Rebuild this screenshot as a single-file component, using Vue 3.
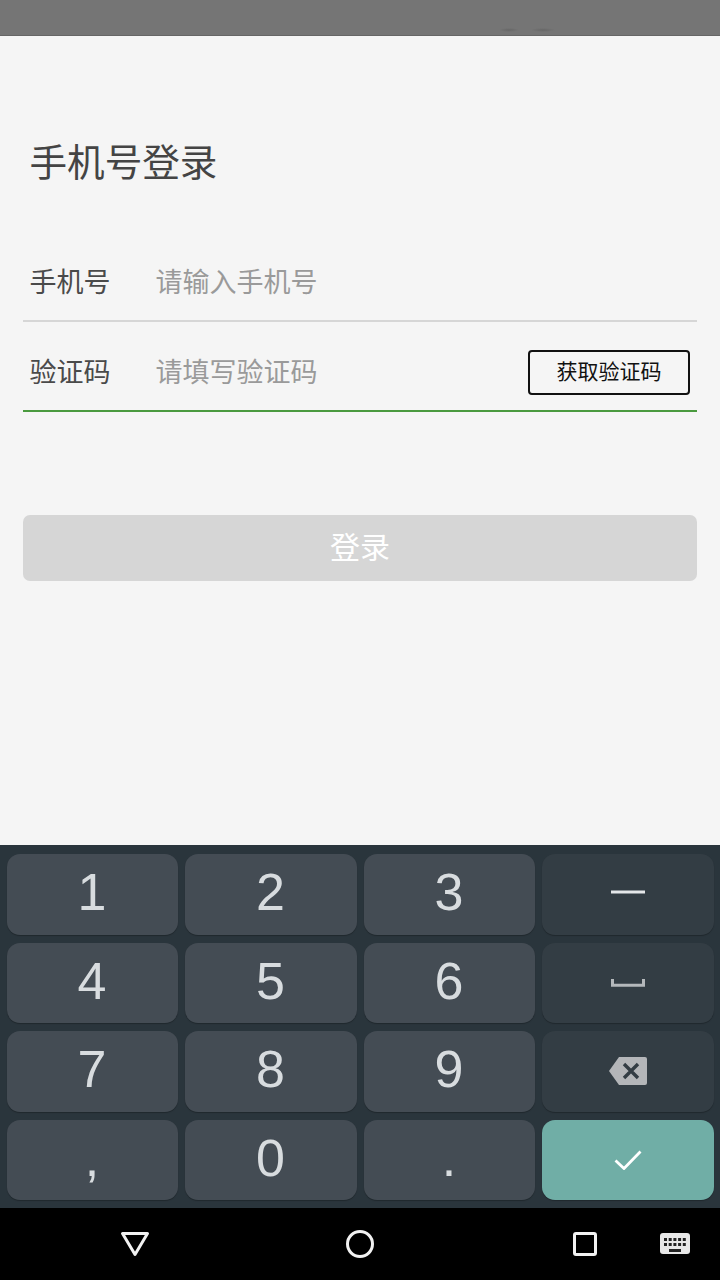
<script setup>
const keys = [
  { id: '1', text: '1' },
  { id: '2', text: '2' },
  { id: '3', text: '3' },
  { id: 'minus', icon: 'minus', dark: true },
  { id: '4', text: '4' },
  { id: '5', text: '5' },
  { id: '6', text: '6' },
  { id: 'space', icon: 'space', dark: true },
  { id: '7', text: '7' },
  { id: '8', text: '8' },
  { id: '9', text: '9' },
  { id: 'del', icon: 'del', dark: true },
  { id: 'comma', text: ',' },
  { id: '0', text: '0' },
  { id: 'dot', text: '.' },
  { id: 'ok', icon: 'ok', accent: true }
]
</script>

<template>
  <div class="screen">
    <div class="status"></div>

    <main class="login">
      <h1 class="login__title">手机号登录</h1>

      <div class="field field--phone">
        <span class="field__label">手机号</span>
        <span class="field__hint">请输入手机号</span>
      </div>
      <div class="field field--active">
        <span class="field__label">验证码</span>
        <span class="field__hint">请填写验证码</span>
        <button class="code-btn">获取验证码</button>
      </div>

      <button class="submit">登录</button>
    </main>

    <section class="keyboard">
      <div
        v-for="k in keys"
        :key="k.id"
        class="key"
        :class="{ 'key--dark': k.dark, 'key--accent': k.accent, 'key--text': k.text }"
      >
        <template v-if="k.text">{{ k.text }}</template>
        <svg v-else-if="k.icon === 'minus'" width="34" height="4" viewBox="0 0 34 4" aria-hidden="true">
          <rect width="34" height="3" y="0.5" fill="#e4e7e9" />
        </svg>
        <svg v-else-if="k.icon === 'space'" class="key__icon" width="34" height="8" viewBox="0 0 34 8" aria-hidden="true">
          <path d="M1.5 0v6.2h31V0" fill="none" stroke="#b4b8bb" stroke-width="3" />
        </svg>
        <svg v-else-if="k.icon === 'del'" class="key__icon" width="38" height="28" viewBox="0 0 38 28" aria-hidden="true">
          <path d="M10 0h26a2 2 0 0 1 2 2v24a2 2 0 0 1-2 2H10L0 14z" fill="#b4b6b9" />
          <path d="M15 7l14 14M29 7L15 21" stroke="#333d44" stroke-width="3.4" fill="none" />
        </svg>
        <svg v-else-if="k.icon === 'ok'" class="key__icon" width="28" height="20" viewBox="0 0 28 20" aria-hidden="true">
          <path d="M1.5 10.5l8.5 8L26.5 1.5" stroke="#fff" stroke-width="2.8" fill="none" />
        </svg>
      </div>
    </section>

    <nav class="navbar">
      <svg class="navbar__back" width="30" height="26" viewBox="0 0 30 26" aria-hidden="true">
        <path d="M2.5 2.5h25L15 23.5z" fill="none" stroke="#f2f2f2" stroke-width="3" stroke-linejoin="round" />
      </svg>
      <svg class="navbar__home" width="28" height="28" viewBox="0 0 28 28" aria-hidden="true">
        <circle cx="14" cy="14" r="12.5" fill="none" stroke="#f2f2f2" stroke-width="3" />
      </svg>
      <svg class="navbar__recent" width="24" height="24" viewBox="0 0 24 24" aria-hidden="true">
        <rect x="1.5" y="1.5" width="21" height="21" rx="1.5" fill="none" stroke="#f2f2f2" stroke-width="3" />
      </svg>
      <svg class="navbar__kbd" width="30" height="22" viewBox="0 0 30 22" aria-hidden="true">
        <rect width="30" height="21" rx="3" fill="#e8e8e8" />
        <g fill="#222">
          <rect x="4" y="5" width="3" height="3" /><rect x="8.7" y="5" width="3" height="3" /><rect x="13.4" y="5" width="3" height="3" /><rect x="18.1" y="5" width="3" height="3" /><rect x="22.8" y="5" width="3" height="3" />
          <rect x="4" y="10" width="3" height="3" /><rect x="8.7" y="10" width="3" height="3" /><rect x="13.4" y="10" width="3" height="3" /><rect x="18.1" y="10" width="3" height="3" /><rect x="22.8" y="10" width="3" height="3" />
          <rect x="9" y="16" width="12" height="3" />
        </g>
      </svg>
    </nav>
  </div>
</template>

<style>
html, body { margin: 0; padding: 0; background: #f5f5f5; }
</style>

<style scoped>
.screen { width: 720px; height: 1280px; display: flex; flex-direction: column; overflow: hidden; background: #f5f5f5; font-family: "Noto Sans CJK SC", "Liberation Sans", sans-serif; }
.status { height: 36px; flex: none; box-sizing: border-box; border-bottom: 1px solid #666; background: radial-gradient(ellipse 10px 2px at 509px 30px, #666, transparent), radial-gradient(ellipse 12px 2px at 543px 30px, #666, transparent), #757575; }

.login { flex: 1; display: flex; flex-direction: column; padding: 0 23px; }
.login__title { margin: 99px 0 0 6.5px; font-size: 37.6px; line-height: 50px; font-weight: 400; color: #444; }

.field { display: flex; align-items: center; height: 90px; box-sizing: border-box; padding: 9px 0 0 6.5px; border-bottom: 2px solid #d6d6d6; }
.field--phone { margin-top: 56px; height: 81px; padding-top: 0; padding-bottom: 0; }
.field--active { border-bottom-color: #4a9a3f; }
.field__label { width: 126px; flex: none; font-size: 27px; color: #4a4a4a; }
.field__hint { font-size: 27px; color: #9a9a9a; }

.code-btn { margin: 3px 7px 0 auto; width: 162px; height: 45px; padding: 0 0 5px; box-sizing: border-box; background: transparent; border: 2px solid #111; border-radius: 4px; font-family: inherit; font-size: 21px; color: #111; }

.submit { margin-top: 103px; height: 66px; padding: 0 0 7px; border: 0; border-radius: 7px; background: #d6d6d6; color: #fff; font-family: inherit; font-size: 30px; }

.keyboard { flex: none; height: 363px; box-sizing: border-box; padding: 9px 6.5px 8px 7px; background: #2a353c; display: grid; grid-template-columns: repeat(4, 1fr); grid-template-rows: repeat(4, 1fr); gap: 8px 7.3px; }
.key { display: flex; align-items: center; justify-content: center; padding-bottom: 4px; box-sizing: border-box; border-radius: 13px; background: #444c54; box-shadow: 0 1px 1px rgba(0, 0, 0, 0.25); color: #d8dcdf; font-family: "Liberation Sans", Arial, sans-serif; font-size: 52px; }
.key--text { padding-right: 1px; }
.key--dark { background: #333d44; }
.key--accent { background: #70aea6; }
.key__icon { position: relative; top: 2px; }

.navbar { flex: none; height: 72px; background: #000; display: flex; align-items: center; padding-left: 120px; }
.navbar__home { margin-left: 196px; }
.navbar__recent { margin-left: 199px; }
.navbar__kbd { margin-left: 63px; }
</style>
